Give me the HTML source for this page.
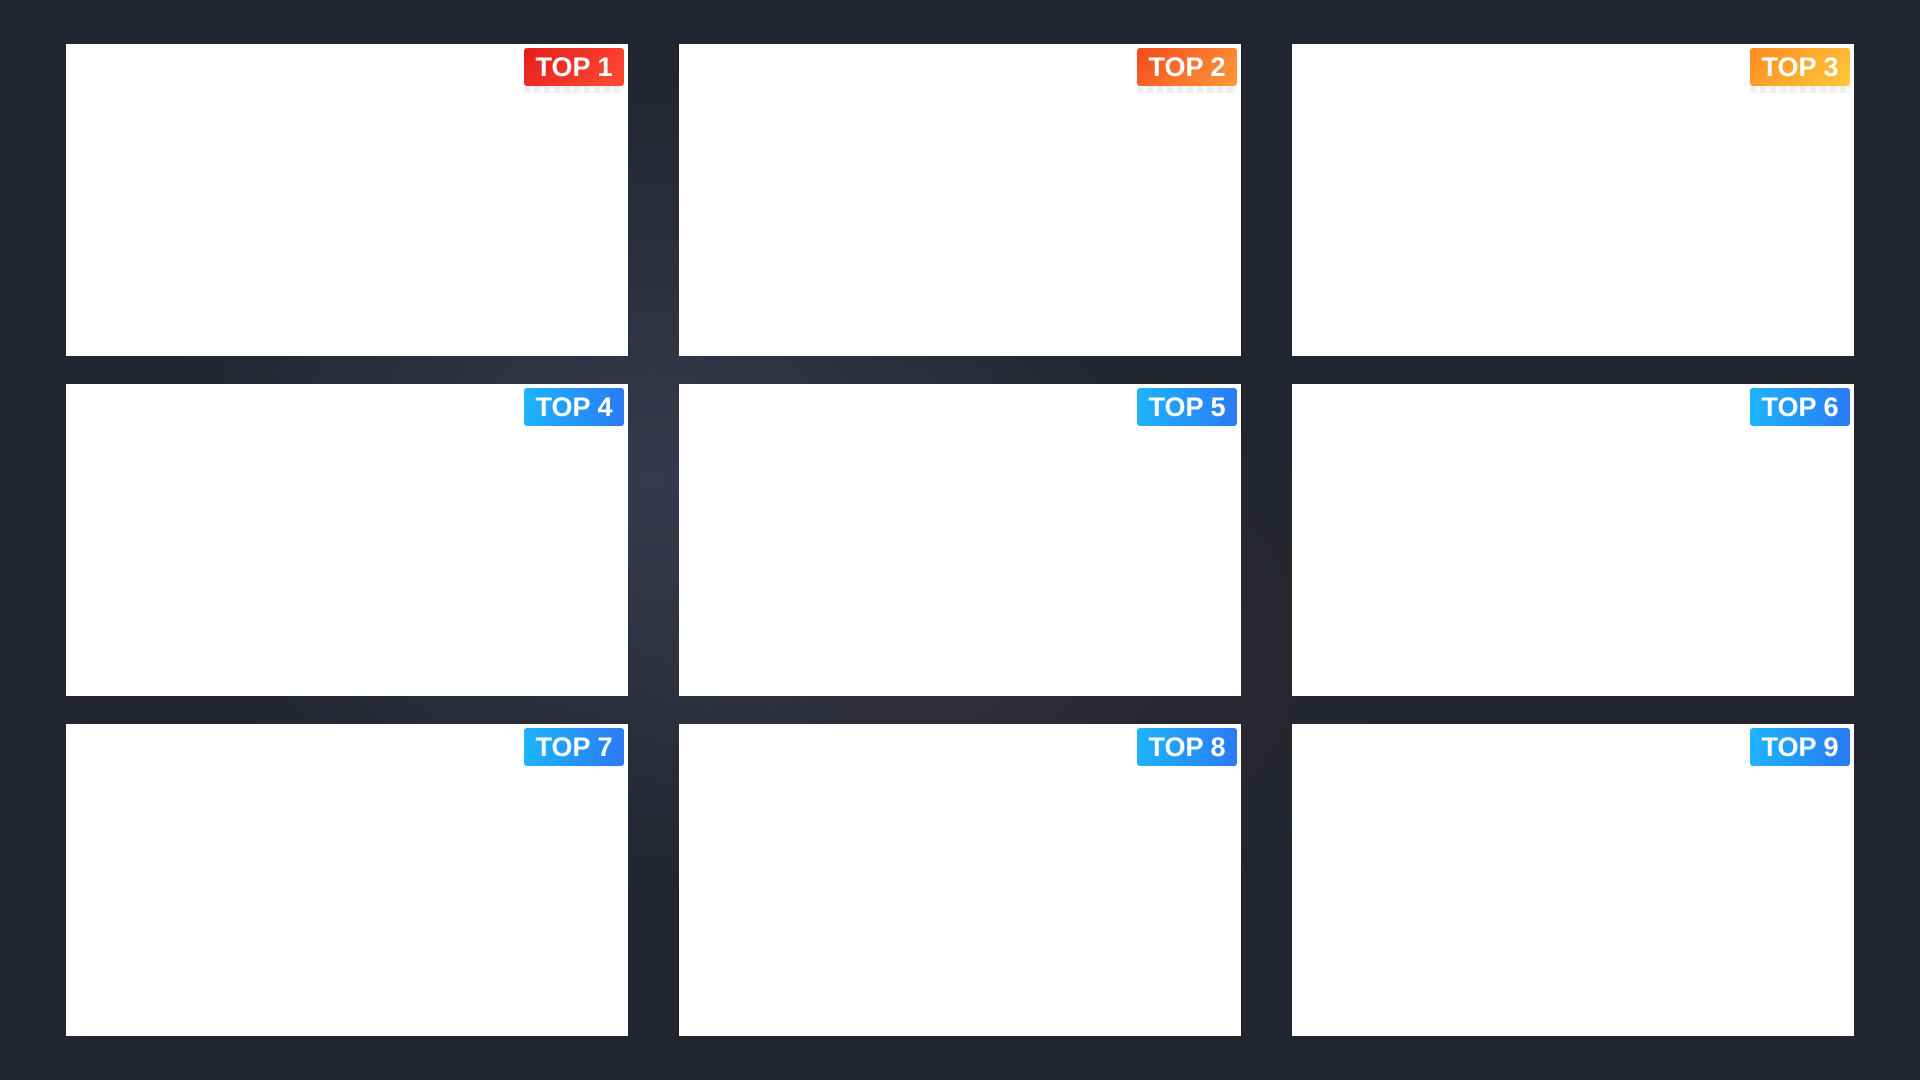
<!DOCTYPE html>
<html><head><style>
body{margin:0;width:1920px;height:1080px;overflow:hidden;background:#22252f;font-family:"Liberation Sans",sans-serif;position:relative}
.bg{position:absolute;inset:0;background:radial-gradient(ellipse 500px 420px at 650px 480px,rgba(70,75,100,.55),transparent),radial-gradient(ellipse 400px 300px at 1000px 650px,rgba(70,55,65,.35),transparent)}
.c{position:absolute;width:562px;height:312px;background:#fff}
.b{position:absolute;top:4px;right:4px;width:100px;height:38px;border-radius:3px;color:#fff;font-weight:bold;font-size:27px;line-height:39px;text-align:center;background:linear-gradient(90deg,#1db4fb,#2a7af5)}
.r1{background:linear-gradient(135deg,#e51e1e,#ff4b32)}
.r2{background:linear-gradient(135deg,#f5481e,#ff9a3a)}
.r3{background:linear-gradient(135deg,#ff8a20,#ffc93a)}
.s{position:absolute;top:42px;right:4px;width:100px;height:7px;background:repeating-linear-gradient(90deg,#eee 0 6px,#fafafa 6px 10px);border-radius:0 0 3px 3px}
</style></head><body><div class="bg"></div>
<div class="c" style="left:66px;top:44px"><div class="b r1">TOP 1</div><div class="s"></div></div>
<div class="c" style="left:679px;top:44px"><div class="b r2">TOP 2</div><div class="s"></div></div>
<div class="c" style="left:1292px;top:44px"><div class="b r3">TOP 3</div><div class="s"></div></div>
<div class="c" style="left:66px;top:384px"><div class="b">TOP 4</div></div>
<div class="c" style="left:679px;top:384px"><div class="b">TOP 5</div></div>
<div class="c" style="left:1292px;top:384px"><div class="b">TOP 6</div></div>
<div class="c" style="left:66px;top:724px"><div class="b">TOP 7</div></div>
<div class="c" style="left:679px;top:724px"><div class="b">TOP 8</div></div>
<div class="c" style="left:1292px;top:724px"><div class="b">TOP 9</div></div>
</body></html>
